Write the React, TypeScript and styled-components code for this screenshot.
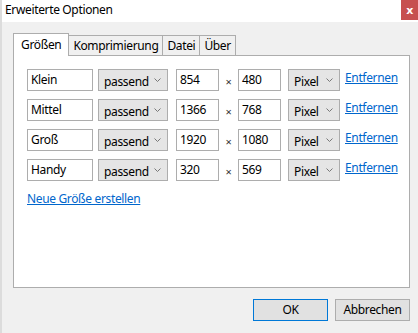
import React from "react";
import styled, { createGlobalStyle } from "styled-components";

const Global = createGlobalStyle`
  html, body { margin: 0; padding: 0; background: #f0f0f0; }
  body { font-family: "Noto Sans", "Liberation Sans", sans-serif; font-size: 12px; letter-spacing: -0.35px; color: #000; }
  * { box-sizing: border-box; }
`;

const Window = styled.div`
  width: 418px;
  height: 333px;
  display: flex;
  flex-direction: column;
  background: #f0f0f0;
  border-left: 2px solid #dcdcdc;
  overflow: hidden;
`;

const TitleBar = styled.div`
  height: 22px;
  background: #fff;
  display: flex;
  align-items: flex-start;
  margin-left: -2px;
`;

const Title = styled.div`
  padding: 3px 0 0 5px;
  font-size: 12px;
  line-height: 14px;
  flex: 1;
`;

const CloseButton = styled.div`
  width: 17px;
  height: 20px;
  background: #c75050;
  color: #fff;
  font-weight: bold;
  font-size: 11px;
  display: flex;
  align-items: center;
  justify-content: center;
  font-family: "DejaVu Sans", sans-serif;
`;

const Body = styled.div`
  flex: 1;
  display: flex;
  flex-direction: column;
  padding: 11px 8px 0 11px;
`;

const TabRow = styled.div`
  display: flex;
  align-items: flex-end;
  height: 23px;
  position: relative;
  z-index: 1;
  margin-bottom: -1px;
`;

const Tab = styled.div<{ $active?: boolean }>`
  height: ${(p) => (p.$active ? 23 : 21)}px;
  padding: ${(p) => (p.$active ? "3px 7px 0 7px" : "2px 4px 0 4px")};
  border: 1px solid #adadad;
  border-bottom: ${(p) => (p.$active ? "none" : "1px solid #adadad")};
  margin-left: ${(p) => (p.$active ? "0" : "-1px")};
  background: ${(p) => (p.$active ? "#fff" : "#f0f0f0")};
  line-height: 16px;
  white-space: nowrap;
  &:first-child { margin-left: 0; }
`;

const Panel = styled.div`
  height: 233px;
  background: #fff;
  border: 1px solid #adadad;
  padding: 13px 13px;
  display: flex;
  flex-direction: column;
  gap: 8px;
`;

const Row = styled.div`
  display: flex;
  align-items: flex-start;
  height: 22px;
`;

const TextBox = styled.div<{ $w: number; $ml?: number }>`
  flex: none;
  width: ${(p) => p.$w}px;
  height: 22px;
  margin-left: ${(p) => p.$ml ?? 0}px;
  border: 1px solid #adadad;
  background: #fff;
  padding: 2px 0 0 3px;
  line-height: 16px;
`;

const Select = styled.div<{ $w: number; $ml: number }>`
  flex: none;
  width: ${(p) => p.$w}px;
  height: 22px;
  margin-left: ${(p) => p.$ml}px;
  border: 1px solid #adadad;
  background: #e5e5e5;
  display: flex;
  align-items: center;
  padding: 3px 0 0 5px;
  line-height: 16px;
  position: relative;
`;

const Chevron = styled.svg`
  position: absolute;
  right: 6px;
  top: 8px;
`;

const Times = styled.div`
  flex: none;
  width: 19px;
  text-align: center;
  padding-top: 5px;
  line-height: 16px;
  color: #333;
  font-size: 11px;
`;

const Link = styled.a<{ $ml?: number }>`
  flex: none;
  margin-left: ${(p) => p.$ml ?? 0}px;
  color: #0066cc;
  text-decoration: underline;
  line-height: 16px;
  padding-top: 1px;
  cursor: pointer;
  white-space: nowrap;
`;

const NewLink = styled(Link)`
  align-self: flex-start;
  padding-top: 2px;
`;

const Footer = styled.div`
  display: flex;
  justify-content: flex-end;
  gap: 7px;
  padding-top: 11px;
`;

const Button = styled.div<{ $default?: boolean }>`
  width: 75px;
  height: 22px;
  border: 1px solid ${(p) => (p.$default ? "#0078d7" : "#adadad")};
  background: #e1e1e1;
  display: flex;
  align-items: center;
  justify-content: center;
  line-height: 16px;
`;

const ChevronIcon = () => (
  <Chevron width="7" height="4" viewBox="0 0 7 4">
    <path d="M0.5 0.5 L3.5 3.5 L6.5 0.5" fill="none" stroke="#777" strokeWidth="1" />
  </Chevron>
);

const rows = [
  { name: "Klein", w: "854", h: "480" },
  { name: "Mittel", w: "1366", h: "768" },
  { name: "Groß", w: "1920", h: "1080" },
  { name: "Handy", w: "320", h: "569" },
];

export default function App() {
  return (
    <>
      <Global />
      <Window>
        <TitleBar>
          <Title>Erweiterte Optionen</Title>
          <CloseButton>x</CloseButton>
        </TitleBar>
        <Body>
          <TabRow>
            <Tab $active>Größen</Tab>
            <Tab>Komprimierung</Tab>
            <Tab>Datei</Tab>
            <Tab>Über</Tab>
          </TabRow>
          <Panel>
            {rows.map((r) => (
              <Row key={r.name}>
                <TextBox $w={66}>{r.name}</TextBox>
                <Select $w={70} $ml={5}>
                  passend
                  <ChevronIcon />
                </Select>
                <TextBox $w={43} $ml={8}>{r.w}</TextBox>
                <Times>×</Times>
                <TextBox $w={43}>{r.h}</TextBox>
                <Select $w={52} $ml={7}>
                  Pixel
                  <ChevronIcon />
                </Select>
                <Link $ml={5}>Entfernen</Link>
              </Row>
            ))}
            <NewLink>Neue Größe erstellen</NewLink>
          </Panel>
          <Footer>
            <Button $default>OK</Button>
            <Button>Abbrechen</Button>
          </Footer>
        </Body>
      </Window>
    </>
  );
}
